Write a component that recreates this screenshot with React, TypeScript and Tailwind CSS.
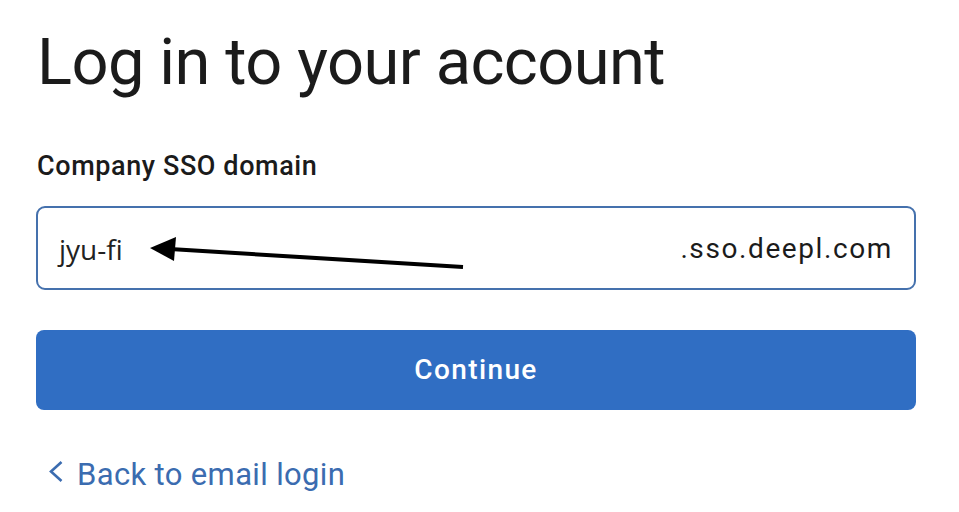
import React from "react";

export default function App() {
  return (
    <div className="w-[959px] h-[512px] bg-white overflow-hidden" style={{ fontFamily: "Roboto, 'Liberation Sans', sans-serif" }}>
      <div className="pl-[36px] pr-[43px] pt-[22px]">
        <h1 className="text-[65px] leading-[80px] text-[#1b1b1b] font-normal pl-[1px] tracking-[-0.6px]">Log in to your account</h1>
        <div className="mt-[48px] text-[27px] leading-[32px] font-medium text-[#1b1b1b] pl-[1px] tracking-[0.6px]">Company SSO domain</div>
        <div className="relative mt-[24px] h-[84px] rounded-[9px] border-2 border-[#4571ad] flex items-center pl-[21px] pr-[19px]">
          <span className="text-[28px] text-[#222] pt-[2px]" style={{ fontFamily: "'Open Sans', sans-serif" }}>jyu-fi</span>
          <span className="ml-auto text-[28px] text-[#1b1b1b] pr-[2px] pt-[2px] tracking-[1.6px]">.sso.deepl.com</span>
          <svg className="absolute left-[110px] top-[28px]" width="360" height="40" viewBox="0 0 360 40">
            <line x1="22" y1="13" x2="315" y2="31" stroke="#000" strokeWidth="4" />
            <polygon points="2,12 28,1 26,25" fill="#000" />
          </svg>
        </div>
        <button className="mt-[40px] w-full h-[80px] rounded-[8px] bg-[#306ec3] text-white text-[28px] font-medium tracking-[1.4px] flex items-center justify-center">
          Continue
        </button>
        <div className="mt-[47px] flex items-center text-[#3b6cb0] pl-[12px]">
          <svg width="16" height="26" viewBox="0 0 16 26" className="mr-[13px] -mt-[6px]">
            <polyline points="13.5,3 3,12.5 13.5,22" fill="none" stroke="#3b6cb0" strokeWidth="2.6" />
          </svg>
          <span className="text-[31px] leading-[36px] tracking-[0.35px]">Back to email login</span>
        </div>
      </div>
    </div>
  );
}
